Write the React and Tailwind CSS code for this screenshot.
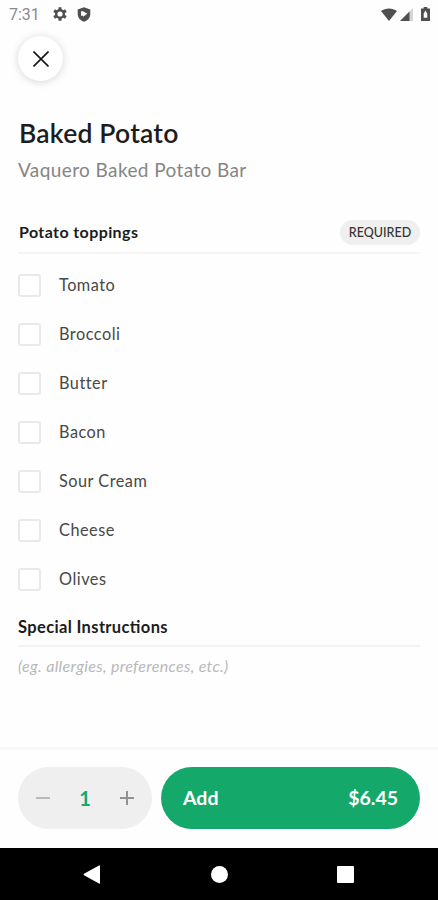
const toppings = ["Tomato", "Broccoli", "Butter", "Bacon", "Sour Cream", "Cheese", "Olives"];

function StatusBar() {
  return (
    <div className="flex h-7 shrink-0 items-center justify-between pl-[9px] pr-[8px] text-[#4f4f4f]">
      <div className="flex items-center">
        <span className="w-[44px] pt-px font-[Roboto] text-[16px] leading-7 text-[#8a8a8a]">7:31</span>
        <svg className="size-[14px]" viewBox="0 0 14 14">
          <g stroke="currentColor" strokeWidth="3">
            <path d="M7 .2v13.600M1.100 3.600l11.800 6.800M12.900 3.600 1.100 10.400" />
          </g>
          <circle cx="7" cy="7" r="5" fill="currentColor" />
          <circle cx="7" cy="7" r="2.600" fill="#fefefe" />
        </svg>
        <svg className="ml-[10px] h-[15px] w-[14px]" viewBox="0 0 14 15">
          <path d="M7 .3 13.300 2.500V7c0 3.700-2.600 6.600-6.300 7.700C3.300 13.600.7 10.700.7 7V2.500z" fill="currentColor" />
          <path d="M4 4.200h2v4.600H4zM6 4.200l4.300 2.500L6 9.800z" fill="#fff" />
        </svg>
      </div>
      <div className="flex items-center">
        <svg className="h-[13px] w-4" viewBox="0 0 16 13" fill="currentColor">
          <path d="M0 3C4.500-.5 11.500-.5 16 3L8 13z" />
        </svg>
        <svg className="ml-[3px] h-[13px] w-[13px]" viewBox="0 0 13 13">
          <path d="M13 0v13H0z" fill="#d5d5d5" />
          <path d="M9.500 3.500V13H0z" fill="currentColor" />
        </svg>
        <svg className="ml-[8px] h-[14px] w-[9px]" viewBox="0 0 9 14" fillRule="evenodd">
          <path d="M2.700 0h3.600v1.400H9V14H0V1.400h2.700zM4.500 3.600 2.700 6.500v4.200h3.600V6.500z" fill="currentColor" />
        </svg>
      </div>
    </div>
  );
}

function Footer() {
  return (
    <footer className="flex h-[101px] shrink-0 items-start gap-[9px] border-t-[3px] border-[#f8f8f8] px-[18px] pt-[17px]">
      <div className="flex h-[62px] w-[134px] items-center justify-between rounded-full bg-[#efefef] px-[18px]">
        <svg className="size-[14px]" viewBox="0 0 14 14" stroke="#b9b9b9" strokeWidth="2">
          <path d="M0 7h14" />
        </svg>
        <span className="text-[20px] font-bold text-[#17aa6c]">1</span>
        <svg className="size-[14px]" viewBox="0 0 14 14" stroke="#929292" strokeWidth="2">
          <path d="M0 7h14M7 0v14" />
        </svg>
      </div>
      <button className="flex h-[62px] w-[259px] items-center justify-between rounded-full bg-[#14a96b] px-[22px] text-[19.500px] font-bold text-white">
        <span>Add</span>
        <span>$6.45</span>
      </button>
    </footer>
  );
}

function NavBar() {
  return (
    <nav className="flex h-[52px] shrink-0 items-center bg-black pl-[83px] text-white">
      <svg className="h-[19px] w-[18px]" viewBox="0 0 18 19" fill="currentColor">
        <path d="M16 .4q1-.4 1 .6v17q0 1-1 .6L1 10.200q-1-.7 0-1.400z" />
      </svg>
      <div className="ml-[110px] size-[17px] rounded-full bg-white" />
      <div className="ml-[109px] size-[17px] rounded-[1px] bg-white" />
    </nav>
  );
}

export default function App() {
  return (
    <div className="flex h-[900px] w-[438px] flex-col overflow-hidden bg-[#fefefe] font-[Lato,sans-serif] text-[#1c1c1c]">
      <StatusBar />
      <main className="flex flex-1 flex-col px-[18px] pt-2">
        <button className="flex size-[45px] items-center justify-center rounded-full bg-white shadow-[0_1px_9px_rgba(0,0,0,0.16)]">
          <svg className="size-4" viewBox="0 0 16 16" stroke="#151515" strokeWidth="1.600">
            <path d="M.5.5l15 15M15.500.5l-15 15" />
          </svg>
        </button>
        <h1 className="mt-9 h-8 pl-px text-[26.500px] font-semibold leading-8 tracking-[0.200px]">Baked Potato</h1>
        <p className="mt-[9px] h-6 text-[19px] leading-6 tracking-[0.4px] text-[#858585]">Vaquero Baked Potato Bar</p>
        <div className="mt-[30px] flex h-[42px] items-center justify-between border-b-2 border-[#f5f5f5]">
          <h2 className="pl-px text-[16px] font-bold tracking-[0.4px]">Potato toppings</h2>
          <span className="flex h-[25px] w-20 items-center justify-center rounded-full bg-[#efefef] pt-0.5 text-[12.500px] font-medium leading-none text-[#333]">REQUIRED</span>
        </div>
        <ul className="mt-[7px]">
          {toppings.map((name) => (
            <li key={name} className="flex h-[49px] items-center gap-[18px]">
              <span className="size-[23px] rounded-[3px] border-2 border-[#e9e9e9] bg-white" />
              <span className="pb-px text-[16.300px] tracking-[0.5px] text-[#484848]">{name}</span>
            </li>
          ))}
        </ul>
        <div className="flex h-[43px] items-center border-b-2 border-[#f3f3f3] pt-[6px]">
          <h2 className="text-[16.500px] font-bold tracking-[0.350px] [font-feature-settings:'liga'_1]">Special Instructions</h2>
        </div>
        <p className="mt-[7px] text-[16px] italic leading-6 tracking-[0.320px] text-[#b8b8b8]">(eg. allergies, preferences, etc.)</p>
      </main>
      <Footer />
      <NavBar />
    </div>
  );
}
